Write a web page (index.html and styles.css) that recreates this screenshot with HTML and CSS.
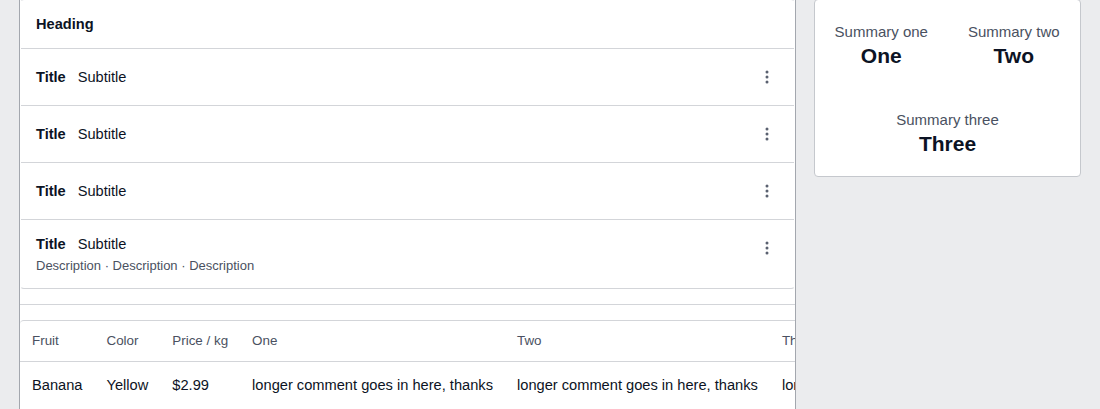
FILE: index.html
```html
<!DOCTYPE html>
<html lang="en">
<head>
<meta charset="utf-8">
<title>Dashboard</title>
<link rel="stylesheet" href="styles.css">
</head>
<body>
<div class="layout">
  <main class="main-col">
    <section class="card list-card">
      <div class="list-heading">Heading</div>
      <div class="list-row">
        <div class="row-text"><div class="row-line"><span class="row-title">Title</span><span class="row-sub">Subtitle</span></div></div>
        <button class="kebab" aria-label="More"><svg width="16" height="16" viewBox="0 0 16 16"><circle cx="8" cy="3" r="1.5"/><circle cx="8" cy="8" r="1.5"/><circle cx="8" cy="13" r="1.5"/></svg></button>
      </div>
      <div class="list-row">
        <div class="row-text"><div class="row-line"><span class="row-title">Title</span><span class="row-sub">Subtitle</span></div></div>
        <button class="kebab" aria-label="More"><svg width="16" height="16" viewBox="0 0 16 16"><circle cx="8" cy="3" r="1.5"/><circle cx="8" cy="8" r="1.5"/><circle cx="8" cy="13" r="1.5"/></svg></button>
      </div>
      <div class="list-row">
        <div class="row-text"><div class="row-line"><span class="row-title">Title</span><span class="row-sub">Subtitle</span></div></div>
        <button class="kebab" aria-label="More"><svg width="16" height="16" viewBox="0 0 16 16"><circle cx="8" cy="3" r="1.5"/><circle cx="8" cy="8" r="1.5"/><circle cx="8" cy="13" r="1.5"/></svg></button>
      </div>
      <div class="list-row list-row-tall">
        <div class="row-text">
          <div class="row-line"><span class="row-title">Title</span><span class="row-sub">Subtitle</span></div>
          <div class="row-desc">Description · Description · Description</div>
        </div>
        <button class="kebab" aria-label="More"><svg width="16" height="16" viewBox="0 0 16 16"><circle cx="8" cy="3" r="1.5"/><circle cx="8" cy="8" r="1.5"/><circle cx="8" cy="13" r="1.5"/></svg></button>
      </div>
    </section>
    <hr class="divider">
    <section class="card table-card">
      <table class="data-table">
        <thead>
          <tr><th>Fruit</th><th>Color</th><th>Price / kg</th><th>One</th><th>Two</th><th>Three</th></tr>
        </thead>
        <tbody>
          <tr><td>Banana</td><td>Yellow</td><td>$2.99</td><td>longer comment goes in here, thanks</td><td>longer comment goes in here, thanks</td><td>longer comment goes in here, thanks</td></tr>
        </tbody>
      </table>
    </section>
  </main>
  <aside class="side-col">
    <section class="card summary-card">
      <div class="summary-item"><div class="summary-label">Summary one</div><div class="summary-value">One</div></div>
      <div class="summary-item"><div class="summary-label">Summary two</div><div class="summary-value">Two</div></div>
      <div class="summary-item"><div class="summary-label">Summary three</div><div class="summary-value">Three</div></div>
    </section>
  </aside>
</div>
</body>
</html>
```
FILE: styles.css
```css
* { box-sizing: border-box; }
html, body { height: 100%; }
body {
  margin: 0;
  background: #ebecee;
  font-family: "Liberation Sans", Arial, sans-serif;
  color: #0c1324;
  overflow: hidden;
}
.layout {
  display: flex;
  align-items: flex-start;
  gap: 18px;
  padding-left: 19px;
  margin-top: -1px;
  height: calc(100% + 1px);
}
.main-col {
  width: 777px;
  height: 100%;
  flex: none;
  background: #fff;
  border-left: 1px solid #a3a7ae;
  border-right: 1px solid #a3a7ae;
  overflow: hidden;
}
.card {
  background: #fff;
  border: 1px solid #d3d5d9;
  border-radius: 4px;
}
.list-card { border-left-color: transparent; border-right-color: transparent; }
.list-heading {
  height: 49px;
  padding: 0 15px;
  display: flex;
  align-items: center;
  font-weight: bold;
  font-size: 14.6px;
  border-bottom: 1px solid #d3d5d9;
}
.list-row {
  display: flex;
  align-items: center;
  justify-content: space-between;
  height: 57px;
  padding: 0 19px 0 15px;
  border-bottom: 1px solid #d3d5d9;
}
.list-row:last-child { border-bottom: none; }
.list-row-tall { height: 68px; align-items: flex-start; padding-top: 13px; }
.list-row-tall .kebab { margin-top: 7px; }
.row-line { display: flex; gap: 12px; font-size: 14.6px; line-height: 22px; }
.row-title { font-weight: bold; }
.row-desc { font-size: 13px; line-height: 20px; color: #4a5161; margin-top: 1px; }
.kebab {
  border: none;
  background: none;
  padding: 0;
  width: 16px;
  height: 16px;
  display: flex;
  fill: #5a6170;
}
.divider {
  margin: 15px 0;
  border: none;
  border-top: 1px solid #d3d5d9;
  height: 0;
}
.table-card {
  width: max-content;
  border-left: none;
  border-bottom: none;
  border-bottom-left-radius: 0;
  border-bottom-right-radius: 0;
}
.data-table { border-collapse: collapse; white-space: nowrap; }
.data-table th {
  font-weight: normal;
  font-size: 13.4px;
  color: #4a5161;
  text-align: left;
  height: 40px;
  padding: 0 12px;
  border-bottom: 1px solid #d3d5d9;
}
.data-table td {
  font-size: 14.65px;
  height: 46px;
  padding: 2px 12px 0;
}
.side-col { width: 267px; flex: none; }
.summary-card {
  display: flex;
  flex-wrap: wrap;
  justify-content: center;
  border-color: #c5c8cd;
}
.summary-item {
  flex: 0 0 50%;
  text-align: center;
  padding: 22px 0 18px;
}
.summary-label { font-size: 15px; line-height: 20px; color: #4a5161; }
.summary-value { font-size: 21px; line-height: 28px; font-weight: bold; }
```
